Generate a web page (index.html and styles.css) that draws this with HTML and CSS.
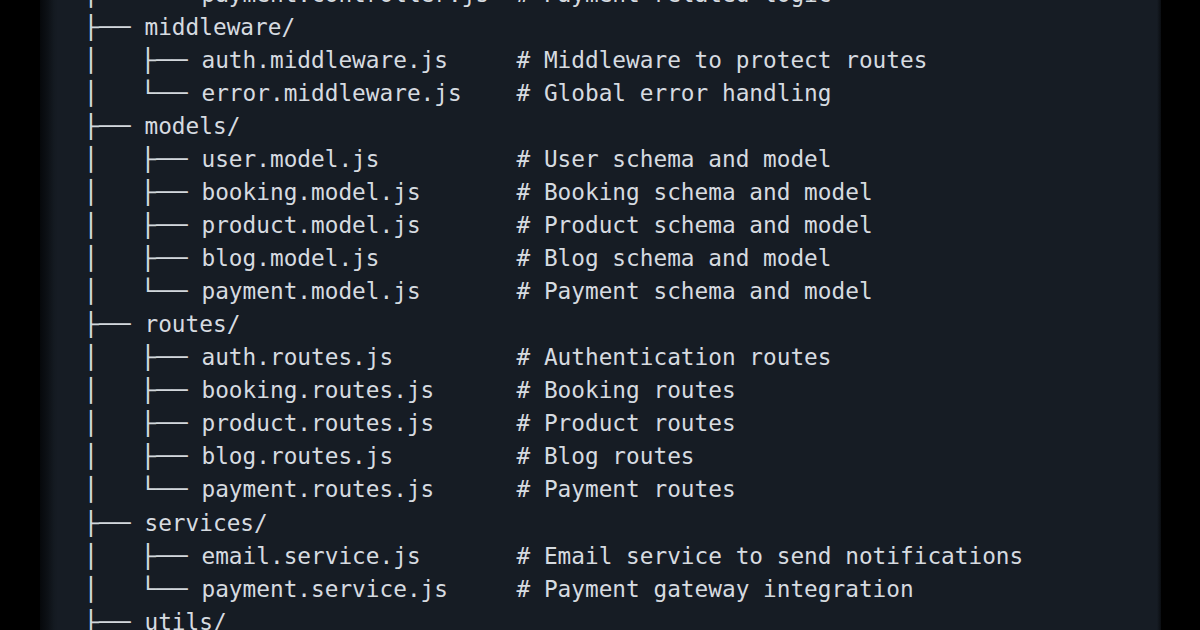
FILE: index.html
```html
<!DOCTYPE html>
<html>
<head>
<meta charset="utf-8">
<link rel="stylesheet" href="styles.css">
</head>
<body>
<div class="screen">
  <div class="edge"></div>
  <div class="panel">
<pre class="tree"><span class="bx">│</span>   <span class="bx">└──</span> payment.controller.js  <span class="c"># Payment related logic</span>
<span class="bx">├──</span> middleware/
<span class="bx">│</span>   <span class="bx">├──</span> auth.middleware.js     <span class="c"># Middleware to protect routes</span>
<span class="bx">│</span>   <span class="bx">└──</span> error.middleware.js    <span class="c"># Global error handling</span>
<span class="bx">├──</span> models/
<span class="bx">│</span>   <span class="bx">├──</span> user.model.js          <span class="c"># User schema and model</span>
<span class="bx">│</span>   <span class="bx">├──</span> booking.model.js       <span class="c"># Booking schema and model</span>
<span class="bx">│</span>   <span class="bx">├──</span> product.model.js       <span class="c"># Product schema and model</span>
<span class="bx">│</span>   <span class="bx">├──</span> blog.model.js          <span class="c"># Blog schema and model</span>
<span class="bx">│</span>   <span class="bx">└──</span> payment.model.js       <span class="c"># Payment schema and model</span>
<span class="bx">├──</span> routes/
<span class="bx">│</span>   <span class="bx">├──</span> auth.routes.js         <span class="c"># Authentication routes</span>
<span class="bx">│</span>   <span class="bx">├──</span> booking.routes.js      <span class="c"># Booking routes</span>
<span class="bx">│</span>   <span class="bx">├──</span> product.routes.js      <span class="c"># Product routes</span>
<span class="bx">│</span>   <span class="bx">├──</span> blog.routes.js         <span class="c"># Blog routes</span>
<span class="bx">│</span>   <span class="bx">└──</span> payment.routes.js      <span class="c"># Payment routes</span>
<span class="bx">├──</span> services/
<span class="bx">│</span>   <span class="bx">├──</span> email.service.js       <span class="c"># Email service to send notifications</span>
<span class="bx">│</span>   <span class="bx">└──</span> payment.service.js     <span class="c"># Payment gateway integration</span>
<span class="bx">├──</span> utils/</pre>
  </div>
  <div class="edge"></div>
</div>
</body>
</html>
```

FILE: styles.css
```css
html, body {
  margin: 0;
  padding: 0;
  background: #000;
}

body {
  width: 1200px;
  height: 630px;
  overflow: hidden;
}

.screen {
  display: flex;
  height: 630px;
}

.edge {
  flex: 1;
  background: #000;
}

.panel {
  width: 1121px;
  flex: none;
  overflow: hidden;
  background:
    linear-gradient(to right, #06080b 0px, #0d1116 8px, #141a21 14px, #161c24 18px, #161c24 1117px, #0a0d11 1121px);
}

.tree {
  margin: -22.5px 0 0 0;
  padding-left: 43.6px;
  font-family: "DejaVu Sans Mono", monospace;
  font-size: 22.75px;
  line-height: 33.06px;
  color: #d6dbe0;
}

.bx {
  display: inline-block;
  vertical-align: top;
  height: 33.06px;
  font-size: 26.4px;
  line-height: 33.06px;
  transform: scaleY(0.86);
  transform-origin: 50% 45%;
  color: #d2d7dc;
}

.c {
  color: #d6dbe0;
}
```
